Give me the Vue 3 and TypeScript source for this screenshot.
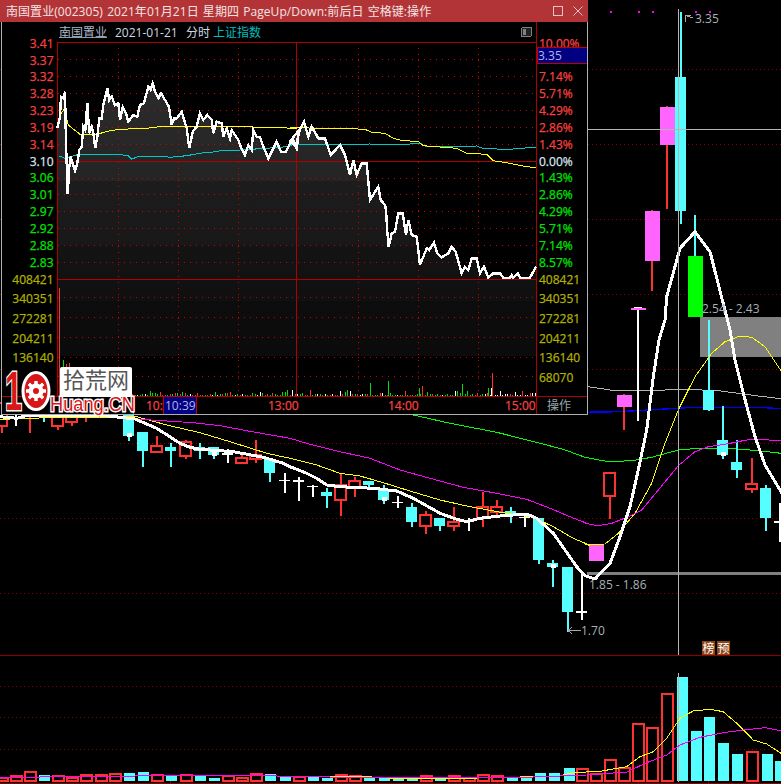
<script setup lang="ts">
type Pt = [number, number]
type Kind = 'red' | 'cyan' | 'white' | 'magenta' | 'green'
interface Candle { x: number; hi: number; lo: number; top: number; bot: number; kind: Kind; dot?: boolean }

const pts = (ox: number, oy: number, raw: number[]): Pt[] => {
  const out: Pt[] = []
  for (let i = 0; i < raw.length; i += 2) out.push([ox + raw[i] / 3, oy + raw[i + 1] / 3])
  return out
}
const str = (p: Pt[]) => p.map(([x, y]) => `${x.toFixed(1)},${y.toFixed(1)}`).join(' ')

/* ---------- intraday window ---------- */
const pricePts: Pt[] = [
  ...pts(0, 0, [172,385,180,350,183,290,190,295,195,275,198,430,203,582,208,500,212,470,218,490,225,512,232,490,238,450,245,440,250,380,256,390,262,310,268,400,275,380,280,400,286,445,292,410,298,355,305,355,310,315,322,265,328,300,335,290,345,315,355,310,360,360,368,320,378,340,385,365,400,345,412,350,420,315,432,310,445,260,452,270,458,250,465,275,475,295,483,280,495,300,507,320,515,375,522,355,530,355,545,335,560,385,568,445,578,395,590,380,600,340,610,360,622,345,635,360,640,400,650,365,665,370,670,410,680,385,690,415,695,390,715,420,722,440,735,465,745,435,755,450,760,390,770,410,780,410,788,435,805,475,815,455,830,425,843,455,858,455,870,430,880,420,890,445,897,390]),
  ...pts(290, 0, [0,425,20,440,25,400,42,365,55,410,65,380,85,415,105,415,122,465,150,435,165,465,180,525,190,480,200,525,215,490,230,490,240,600,265,560,272,600,285,615]),
  ...pts(290, 210, [288,0,292,65,296,110,305,70,315,65,325,10,338,10,348,75,355,30,365,75,380,80,390,165,410,115,418,120,432,98,442,130,455,142,475,130,485,110,497,125,515,190,525,170,535,180,545,145,560,145,570,190,582,170,595,203,610,190,630,190,640,203,660,203,665,195,670,203,683,190,690,203,720,203,738,170]),
]
const priceLine = str(pricePts)
const priceArea = `57.5,357 ${priceLine} 536,357`
const avgLine = str([
  ...pts(0, 0, [172,385,180,345,193,328,205,375,240,403,290,403,330,392,360,388,440,385,480,380,730,380,890,385]),
  ...pts(290, 0, [0,383,180,386,225,388,245,397,285,400,310,415,335,421,385,425,400,437,500,445,530,460,590,463,610,482,650,488,710,500,738,503]),
])
const indexLine = str([
  ...pts(0, 0, [178,468,195,475,240,462,300,465,350,463,385,467,395,477,420,468,480,468,510,472,560,467,610,458,650,455,670,450,720,450,800,445,860,440,897,428]),
  ...pts(290, 0, [0,433,60,433,120,435,240,432,320,435,390,430,410,440,560,438,580,446,660,448,738,441]),
])

const hLines = [59, 76, 93, 110, 127, 144, 178, 194, 211, 228, 245, 262, 297, 317, 337, 357, 376]
const vLines = [118, 178, 238, 358, 418, 478]

const leftPrice = [
  { t: '3.41', y: 43, c: 'up' }, { t: '3.37', y: 60, c: 'up' }, { t: '3.32', y: 76, c: 'up' },
  { t: '3.28', y: 93, c: 'up' }, { t: '3.23', y: 110, c: 'up' }, { t: '3.19', y: 127, c: 'up' },
  { t: '3.14', y: 144, c: 'up' }, { t: '3.10', y: 161, c: 'flat' }, { t: '3.06', y: 177, c: 'down' },
  { t: '3.01', y: 194, c: 'down' }, { t: '2.97', y: 211, c: 'down' }, { t: '2.92', y: 228, c: 'down' },
  { t: '2.88', y: 245, c: 'down' }, { t: '2.83', y: 262, c: 'down' }, { t: '408421', y: 279, c: 'vol' },
  { t: '340351', y: 298, c: 'vol' }, { t: '272281', y: 318, c: 'vol' }, { t: '204211', y: 338, c: 'vol' },
  { t: '136140', y: 357, c: 'vol' },
]
const rightPct = [
  { t: '10.00%', y: 43, c: 'up' }, { t: '7.14%', y: 76, c: 'up' }, { t: '5.71%', y: 93, c: 'up' },
  { t: '4.29%', y: 110, c: 'up' }, { t: '2.86%', y: 127, c: 'up' }, { t: '1.43%', y: 144, c: 'up' },
  { t: '0.00%', y: 161, c: 'flat' }, { t: '1.43%', y: 177, c: 'down' }, { t: '2.86%', y: 194, c: 'down' },
  { t: '4.29%', y: 211, c: 'down' }, { t: '5.71%', y: 228, c: 'down' }, { t: '7.14%', y: 245, c: 'down' },
  { t: '8.57%', y: 262, c: 'down' }, { t: '408421', y: 279, c: 'vol' }, { t: '340351', y: 298, c: 'vol' },
  { t: '272281', y: 318, c: 'vol' }, { t: '204211', y: 338, c: 'vol' }, { t: '136140', y: 357, c: 'vol' },
  { t: '68070', y: 377, c: 'vol' },
]

let seed = 17
const rnd = () => { seed = (seed * 137 + 59) % 1009; return seed / 1009 }
const volBars: { x: number; top: number; c: string }[] = []
for (let x = 62; x < 536; x += 2.5) {
  const r = rnd()
  const h = 1 + Math.floor(rnd() * rnd() * 6)
  volBars.push({ x: Math.round(x), top: 396 - h, c: x > 495 ? (r < 0.6 ? '#fff' : '#ff3232') : r < 0.45 ? '#00e000' : r < 0.85 ? '#ff3232' : '#fff' })
}
volBars.push(
  { x: 59, top: 288, c: '#ff3232' }, { x: 63, top: 360, c: '#00e000' }, { x: 66, top: 364, c: '#ff3232' },
  { x: 69, top: 363, c: '#ff3232' }, { x: 370, top: 383, c: '#00e000' }, { x: 388, top: 381, c: '#00e000' },
  { x: 419, top: 388, c: '#00e000' }, { x: 422, top: 386, c: '#ff3232' }, { x: 462, top: 384, c: '#00e000' },
  { x: 492, top: 373, c: '#ff3232' }, { x: 488, top: 388, c: '#00e000' }, { x: 491, top: 388, c: '#fff' },
)

/* ---------- daily K-line ---------- */
const c = (ox: number, oy: number, x: number, hi: number, lo: number, top: number, bot: number, kind: Kind, dot = false): Candle => ({
  x: ox + x / 3, hi: oy + hi / 3, lo: oy + lo / 3, top: oy + top / 3, bot: oy + bot / 3, kind, dot,
})
const candles: Candle[] = [
  c(0,410,5,-30,68,-20,47,'red'), c(0,410,47,-30,47,-10,-6,'white'), c(0,410,90,-30,68,-25,18,'red'),
  c(0,410,131,-30,35,-30,0,'cyan'), c(0,410,174,-20,60,-15,47,'red'), c(0,410,216,-20,47,-15,36,'red'),
  c(0,410,258,-20,36,-15,22,'red'), c(0,410,302,-20,22,-15,10,'red'), c(0,410,387,-30,93,-30,78,'cyan',true),
  c(0,410,430,66,171,66,123,'cyan'), c(0,410,471,78,126,108,126,'red'), c(0,410,513,99,171,111,123,'cyan'),
  c(0,410,558,90,147,96,138,'red'), c(0,410,600,99,147,111,123,'cyan'), c(0,410,642,111,147,111,135,'cyan',true),
  c(0,410,684,117,159,130,134,'white'), c(0,410,726,135,159,144,159,'red'), c(0,410,768,90,159,135,147,'red'),
  c(0,410,810,144,216,147,189,'cyan'), c(0,410,855,189,249,210,214,'white'), c(0,410,897,201,273,210,216,'white'),
  c(290,410,69,225,261,228,232,'white'), c(290,410,112,234,294,246,258,'cyan'), c(290,410,153,192,318,225,270,'red'),
  c(290,410,195,201,261,213,234,'red'), c(290,410,238,213,234,213,225,'cyan'), c(290,410,283,225,282,237,270,'cyan',true),
  c(290,410,325,258,294,276,280,'white'), c(290,410,367,279,351,291,336,'cyan'), c(290,410,408,303,372,315,348,'red'),
  c(290,410,450,324,363,324,348,'cyan'), c(290,410,492,291,363,336,348,'red'), c(290,410,537,324,363,332,336,'white'),
  c(290,410,579,246,351,291,324,'red'), c(290,410,621,270,318,291,306,'red'), c(290,410,663,291,339,303,315,'cyan'),
  c(290,410,705,312,351,320,324,'white'), c(290,410,748,324,462,324,450,'cyan'), c(290,410,790,450,531,459,471,'cyan',true),
  c(290,410,835,471,667,471,606,'cyan'), c(290,410,877,495,630,603,608,'white'),
  c(585,320,34,672,722,675,722,'magenta'), c(585,320,75,459,597,459,528,'red'), c(585,320,118,222,330,225,260,'magenta'),
  c(585,0,158,922,1263,925,930,'white'),
  c(585,0,200,631,873,633,783,'magenta'), c(585,0,245,318,627,321,435,'magenta'), c(585,0,288,37,672,231,633,'cyan'),
  c(585,0,330,645,950,768,950,'green'),
  c(585,320,372,0,272,210,270,'cyan'), c(585,320,414,258,416,360,405,'cyan',true), c(585,320,456,360,474,426,450,'cyan'),
  c(585,320,501,414,519,493,507,'red'), c(585,320,544,495,633,504,594,'cyan'), c(585,320,585,550,665,604,608,'white'),
]
const bodyW: Record<Kind, number> = { red: 11, cyan: 11, white: 11, magenta: 15, green: 15 }
const fill: Record<Kind, string> = { red: '#000', cyan: '#55ffff', white: '#fff', magenta: '#ff64ff', green: '#00ff00' }
const wick: Record<Kind, string> = { red: '#ff3232', cyan: '#55ffff', white: '#fff', magenta: '#ff3232', green: '#55ffff' }

const maWhite = str([
  ...pts(0, 410, [0,20,50,25,75,18,300,15,405,27,470,55,540,100,570,112,600,118,700,125,790,142,850,160]),
  ...pts(290, 410, [0,170,50,190,80,205,110,225,150,230,250,235,320,243,370,265,450,310,500,328,530,335,570,325,630,318,710,312,740,325,790,370,860,470,880,493]),
  ...pts(585, 320, [0,767,30,777,75,730,105,650,135,560,160,450,185,330,205,170,222,60,240,0]),
  ...pts(585, 0, [245,890,285,745,330,695,375,755,435,990]),
  ...pts(585, 320, [450,120,475,220,510,350,540,435,585,510,620,570]),
])
const maYellow = str([
  ...pts(0, 410, [0,30,50,25,410,20,500,45,600,68,700,98,800,130]),
  ...pts(290, 410, [0,145,80,165,150,190,210,198,280,218,350,240,450,270,540,290,640,308,730,322,790,350,850,385,900,406]),
  ...pts(585, 320, [0,673,60,672,100,640,150,580,200,490,240,370,280,270,330,170,380,100,420,65,465,48,500,52,540,80,590,155]),
])
const maMagenta = str([
  ...pts(0, 410, [280,18,360,20,420,28,500,33,580,38,660,47,740,62,830,78]),
  ...pts(290, 410, [0,85,60,103,150,125,240,145,330,180,420,205,520,232,620,250,710,268,780,295,840,320,890,340]),
  ...pts(585, 320, [0,610,40,617,80,610,130,590,170,570,220,510,280,437,330,395,370,380,420,373,500,357,588,362]),
])
const maGreen = str([
  ...pts(290, 410, [370,15,480,40,620,67,720,92,820,118]),
  ...pts(585, 320, [0,412,70,425,140,422,200,412,280,390,350,384,420,384,520,392,588,400]),
])
const maBlue = str(pts(585, 320, [0,277,100,275,280,265,320,262,520,262,588,266]))
const maGrey = str(pts(585, 320, [10,200,90,212,200,213,280,207,400,212,520,228,588,236]))

const kDots = [69, 144, 219, 294, 369, 443, 518, 593]
const subDots = [686, 717, 749]
const topDots = [610, 638, 652, 695, 709]

/* ---------- bottom volume panel ---------- */
const subBars: { x: number; top: number; kind: 'red' | 'cyan' }[] = []
const sub1: [number, number, 'red' | 'cyan'][] = [
  [6,414,'red'],[48,408,'red'],[90,395,'red'],[133,405,'cyan'],[174,408,'red'],[216,413,'red'],[258,406,'red'],[303,406,'red'],[345,403,'red'],
  [388,399,'cyan'],[430,396,'cyan'],[471,406,'red'],[513,406,'cyan'],[558,404,'red'],[600,406,'cyan'],[642,414,'cyan'],[684,408,'red'],
  [726,414,'red'],[768,403,'red'],[810,403,'cyan'],[855,411,'cyan'],[897,410,'red'],[940,411,'cyan'],[982,414,'cyan'],[1023,406,'red'],
  [1064,409,'red'],[1107,414,'cyan'],[1152,414,'cyan'],
]
const sub2: [number, number, 'red' | 'cyan'][] = [
  [-5,414,'cyan'],[36,414,'cyan'],[78,409,'red'],[120,414,'cyan'],[162,409,'red'],[206,414,'red'],[248,404,'red'],[290,407,'red'],[335,414,'cyan'],[377,414,'cyan'],
  [419,400,'cyan'],[461,400,'cyan'],[506,384,'cyan'],[545,386,'red'],[588,401,'red'],[630,359,'red'],[672,383,'red'],[714,252,'red'],
  [756,263,'red'],[801,161,'red'],[845,111,'cyan'],[887,273,'cyan'],[928,231,'cyan'],[970,309,'cyan'],[1012,342,'cyan'],[1056,335,'red'],
  [1100,342,'cyan'],[1140,363,'cyan'],
]
sub1.forEach(([x, t, k]) => subBars.push({ x: x / 3, top: 640 + t / 3, kind: k }))
sub2.forEach(([x, t, k]) => subBars.push({ x: 400 + x / 3, top: 640 + t / 3, kind: k }))
const subYellow = str(pts(400, 640, [-330,410,-120,409,0,416,140,416,400,410,480,408,500,402,540,397,600,394,680,380,720,350,760,335,800,295,840,235,880,213,930,208,970,215,1010,250,1060,300,1100,312,1143,340]))
const subMagenta = str([
  ...pts(0, 640, [0,412,400,409,420,406,620,406,830,408,960,408,1000,412,1200,412]),
  ...pts(400, 640, [400,411,480,408,560,405,680,396,740,368,800,345,840,315,900,292,970,278,1030,270,1095,263,1143,272]),
])
const subTicks = [22, 97, 170, 252, 333, 497, 638, 708]
const gearTeeth = [0, 1, 2, 3, 4, 5, 6, 7].map((i) => i * 45)
</script>

<template>
  <div class="terminal">
    <svg class="kline" width="781" height="784" viewBox="0 0 781 784" shape-rendering="crispEdges">
      <line v-for="y in kDots" :key="'kd' + y" x1="0" x2="781" :y1="y + 0.5" :y2="y + 0.5" class="dim-dot" />
      <line v-for="y in subDots" :key="'sd' + y" x1="0" x2="781" :y1="y + 0.5" :y2="y + 0.5" class="dim-dot" />
      <line x1="0" x2="781" y1="655.5" y2="655.5" class="frame" />
      <line x1="0" x2="781" y1="783" y2="783" class="frame" />
      <line v-for="x in subTicks" :key="'st' + x" :x1="x + 0.5" :x2="x + 0.5" y1="781" y2="784" class="frame" />

      <rect x="700" y="317" width="81" height="40" fill="#808080" />
      <rect x="587" y="572" width="194" height="3" fill="#808080" />

      <polyline :points="maGrey" class="line" stroke="#b4b4b4" />
      <polyline :points="maBlue" class="line thick" stroke="#0000ff" />
      <polyline :points="maGreen" class="line" stroke="#00ff00" />

      <g v-for="(k, i) in candles" :key="'c' + i">
        <rect :x="Math.round(k.x) - 1" :y="k.hi" width="2" :height="k.lo - k.hi" :fill="wick[k.kind]" />
        <rect
          :x="Math.round(k.x) - bodyW[k.kind] / 2 - (k.kind === 'green' || k.kind === 'magenta' ? 0 : 0.5)"
          :y="k.top"
          :width="bodyW[k.kind]"
          :height="k.bot - k.top"
          :fill="fill[k.kind]"
          :stroke="k.kind === 'red' ? '#ff3232' : 'none'"
          :stroke-width="k.kind === 'red' ? 2 : 0"
        />
        <rect v-if="k.dot" :x="Math.round(k.x) - 2.5" :y="k.bot - 3" width="5" height="4" fill="#fff" />
      </g>
      <rect x="631" y="308" width="15" height="2" fill="#ff64ff" />
      <rect x="634" y="307" width="8" height="1" fill="#fff" />

      <polyline :points="maYellow" class="line" stroke="#ffff00" />
      <polyline :points="maMagenta" class="line" stroke="#ff00ff" />
      <polyline :points="maWhite" class="line ma" stroke="#ffffff" />

      <rect v-for="x in topDots" :key="'td' + x" :x="x" y="11" width="2" height="2" fill="#ff00ff" />

      <line x1="588" x2="781" y1="129.5" y2="129.5" class="cross" />
      <line x1="678.5" x2="678.5" y1="9" y2="655" class="cross" />

      <g v-for="(b, i) in subBars" :key="'b' + i">
        <rect
          :x="Math.round(b.x) - 5.5"
          :y="b.top"
          width="11"
          :height="781 - b.top"
          :fill="b.kind === 'cyan' ? '#55ffff' : '#000'"
          :stroke="b.kind === 'red' ? '#ff3232' : 'none'"
          :stroke-width="b.kind === 'red' ? 2 : 0"
        />
      </g>
      <line x1="678.5" x2="678.5" y1="673" y2="782" class="cross" />
      <polyline :points="subYellow" class="line" stroke="#ffff00" />
      <polyline :points="subMagenta" class="line" stroke="#ff00ff" />

      <g class="note">
        <path d="M693 18 L685 15.5 M685 15.5 h6 M685 15.5 v6" fill="none" stroke="#a8a8a8" />
        <text x="695" y="23">3.35</text>
        <text x="702" y="313">2.54 - 2.43</text>
        <text x="589" y="589">1.85 - 1.86</text>
        <path d="M581 630.5 H568 M568 630.5 l4 -3 M568 630.5 l4 3" fill="none" stroke="#a8a8a8" />
        <text x="581" y="635">1.70</text>
      </g>
      <rect x="702" y="641" width="13" height="14" fill="#8b4513" />
      <rect x="717" y="641" width="13" height="14" fill="#8b4513" />
      <text x="702.5" y="652.5" class="tag">榜</text>
      <text x="717.5" y="652.5" class="tag">预</text>
    </svg>

    <section class="popup">
      <header class="title">
        <span class="title-text">南国置业(002305)  2021年01月21日  星期四  PageUp/Down:前后日 空格键:操作</span>
        <div class="win-btns">
          <svg width="10" height="10" viewBox="0 0 10 10"><rect x="0.5" y="0.5" width="9" height="9" fill="none" stroke="#e6c4c4" /></svg>
          <svg width="10" height="10" viewBox="0 0 10 10"><path d="M0.5 0.5 L9.5 9.5 M9.5 0.5 L0.5 9.5" fill="none" stroke="#e6c4c4" /></svg>
        </div>
      </header>
      <div class="body">
        <svg width="585" height="392" viewBox="2 22 585 392">
          <defs>
            <linearGradient id="areaFill" gradientUnits="userSpaceOnUse" x1="0" x2="0" y1="80" y2="360">
              <stop offset="0" stop-color="#2c2c2c" />
              <stop offset="0.36" stop-color="#242424" />
              <stop offset="0.36" stop-color="#1d1d1d" />
              <stop offset="0.59" stop-color="#181818" />
              <stop offset="0.59" stop-color="#141414" />
              <stop offset="0.79" stop-color="#101010" />
              <stop offset="0.79" stop-color="#0d0d0d" />
              <stop offset="0.985" stop-color="#0b0b0b" />
              <stop offset="0.985" stop-color="#000" />
            </linearGradient>
          </defs>

          <polygon :points="priceArea" fill="url(#areaFill)" />

          <g shape-rendering="crispEdges">
            <line v-for="y in hLines" :key="'h' + y" x1="58" x2="536" :y1="y + 0.5" :y2="y + 0.5" class="dot" />
            <line v-for="x in vLines" :key="'v' + x" :x1="x + 0.5" :x2="x + 0.5" y1="42" y2="396" class="dot" />
            <line x1="57.5" x2="536" y1="42.5" y2="42.5" class="solid" />
            <line x1="57.5" x2="536" y1="161.5" y2="161.5" class="solid" />
            <line x1="57.5" x2="536" y1="279.5" y2="279.5" class="solid" />
            <line x1="2" x2="587" y1="396.5" y2="396.5" class="solid" />
            <line x1="57.5" x2="57.5" y1="42" y2="396" class="solid" />
            <line x1="296.5" x2="296.5" y1="42" y2="396" class="solid" />
            <line x1="536.5" x2="536.5" y1="22" y2="414" class="solid" />

            <rect v-for="(b, i) in volBars" :key="'vb' + i" :x="b.x" :y="b.top" width="1" :height="396 - b.top" :fill="b.c" />

            <polyline :points="indexLine" class="line" stroke="#00c8c8" />
            <polyline :points="avgLine" class="line" stroke="#ffff00" />
            <polyline :points="priceLine" class="line price" stroke="#ffffff" />
          </g>

          <text x="59" y="36.5" class="h-name">南国置业</text>
          <line x1="59" x2="107" y1="37.5" y2="37.5" stroke="#8aa0b0" shape-rendering="crispEdges" />
          <text x="115" y="36.5" class="h-date">2021-01-21</text>
          <text x="186" y="36.5" class="h-date">分时</text>
          <text x="213" y="36.5" class="h-index">上证指数</text>
          <rect x="521.5" y="27.5" width="10" height="9" rx="1.5" fill="#222" stroke="#808080" shape-rendering="crispEdges" />
          <rect x="523" y="29" width="3" height="6" fill="#808080" shape-rendering="crispEdges" />

          <text v-for="l in leftPrice" :key="'lp' + l.t" x="53.5" :y="l.y + 4.5" text-anchor="end" class="num" :class="l.c">{{ l.t }}</text>
          <text v-for="(l, i) in rightPct" :key="'rp' + i" x="539" :y="l.y + 4.5" class="num" :class="l.c">{{ l.t }}</text>

          <rect x="537" y="47.5" width="50" height="15.5" fill="#000080" stroke="#c00000" shape-rendering="crispEdges" />
          <text x="538" y="59.5" class="num sel">3.35</text>

          <text x="146" y="410" class="num up">10:</text>
          <rect x="163.5" y="396.5" width="33" height="18" fill="#000080" stroke="#c00000" shape-rendering="crispEdges" />
          <text x="165" y="410" class="num sel">10:39</text>
          <text x="268" y="410" class="num up">13:00</text>
          <text x="388" y="410" class="num up">14:00</text>
          <text x="505" y="410" class="num up">15:00</text>
          <text x="547" y="410" class="op">操作</text>
        </svg>
      </div>
    </section>

    <svg class="logo" width="150" height="72" viewBox="0 362 150 72">
      <rect x="60" y="367" width="72" height="30" rx="2" fill="#fff" />
      <text x="63" y="388" class="logo-cn">拾荒网</text>
      <text x="5" y="410" textLength="17" lengthAdjust="spacingAndGlyphs" class="logo-one">1</text>
      <ellipse cx="36" cy="391" rx="13" ry="18.5" fill="#d81818" stroke="#fff" stroke-width="3" />
      <g transform="translate(36 391)">
        <rect v-for="d in gearTeeth" :key="d" x="-1.5" y="-10" width="3" height="20" fill="#fff" :transform="`rotate(${d})`" />
        <circle r="7.5" fill="#fff" />
        <circle r="3" fill="#d81818" />
      </g>
      <text x="50" y="411" textLength="85" lengthAdjust="spacingAndGlyphs" class="logo-en">Huang.CN</text>
    </svg>
  </div>
</template>

<style scoped>
.terminal {
  position: relative;
  width: 781px;
  height: 784px;
  background: #000;
  overflow: hidden;
  font-family: "Open Sans", "Noto Sans CJK SC", sans-serif;
}
.kline {
  display: block;
}
.line {
  fill: none;
  stroke-width: 1;
}
.thick {
  stroke-width: 1.4;
}
.ma {
  stroke-width: 3;
  stroke-linejoin: round;
}
.price {
  stroke-width: 2.4;
}
.dim-dot {
  stroke: #8c0000;
  stroke-width: 1;
  stroke-dasharray: 1 3;
}
.frame {
  stroke: #8c0000;
  stroke-width: 1;
}
.cross {
  stroke: #b4b4b4;
  stroke-width: 1;
}
.note text {
  font-size: 12px;
  fill: #a8b0b8;
}
.tag {
  font-size: 12px;
  fill: #fff;
  font-family: "Noto Sans CJK SC", sans-serif;
}
.popup {
  position: absolute;
  left: 0;
  top: 0;
  width: 588px;
  height: 415px;
  display: flex;
  flex-direction: column;
}
.title {
  height: 22px;
  flex: none;
  background: #b33437;
  color: #f4e4e4;
  display: flex;
  align-items: center;
  justify-content: space-between;
  padding: 0 5px 0 6px;
}
.title-text {
  font-size: 12px;
  white-space: pre;
  word-spacing: 1px;
  letter-spacing: 0.06px;
}
.win-btns {
  display: flex;
  gap: 10px;
}
.win-btns svg {
  display: block;
}
.body {
  flex: 1;
  margin-left: 1px;
  background: #000;
  border-left: 1px solid #b0b0b0;
  border-right: 1px solid #b0b0b0;
  border-bottom: 1px solid #b0b0b0;
}
.body svg {
  display: block;
}
.dot {
  stroke: #d00000;
  stroke-width: 1;
  stroke-dasharray: 1 5;
}
.solid {
  stroke: #b00000;
  stroke-width: 1;
}
.num {
  font-size: 12px;
  stroke-width: 0.25px;
}
.up {
  fill: #f84040;
  stroke: #f84040;
}
.down {
  fill: #00e400;
  stroke: #00e400;
}
.flat {
  fill: #d8e4f0;
  stroke: #d8e4f0;
}
.vol {
  fill: #b0b000;
  stroke: #b0b000;
}
.sel {
  fill: #b4b4ec;
}
.h-name {
  font-size: 12px;
  fill: #a8b8c8;
}
.h-date {
  font-size: 12px;
  fill: #d0d8e0;
}
.h-index {
  font-size: 12px;
  fill: #00bcbc;
}
.op {
  font-size: 12px;
  fill: #9aa4b0;
}
.logo {
  position: absolute;
  left: 0;
  top: 362px;
}
.logo-cn {
  font-size: 22px;
  font-weight: 400;
  fill: #555;
  font-family: "Noto Sans CJK SC", sans-serif;
}
.logo-one {
  font-family: "Liberation Sans", sans-serif;
  font-size: 56px;
  font-weight: 700;
  fill: #d81818;
  stroke: #fff;
  stroke-width: 3px;
  paint-order: stroke;
}
.logo-en {
  font-family: "Liberation Sans", sans-serif;
  font-size: 21px;
  fill: #d81818;
  stroke: #fff;
  stroke-width: 3px;
  paint-order: stroke;
}
</style>
